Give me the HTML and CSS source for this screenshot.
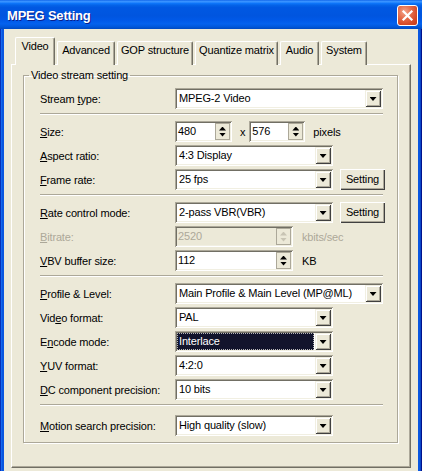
FILE: index.html
```html
<!DOCTYPE html>
<html lang="en">
<head>
<meta charset="utf-8">
<title>MPEG Setting</title>
<link rel="stylesheet" href="styles.css">
</head>
<body>
<div class="window">
  <div class="titlebar">
    <span class="title">MPEG Setting</span>
    <span class="close"><svg width="13" height="13" viewBox="0 0 13 13"><path d="M2.5 2.5 L10.5 10.5 M10.5 2.5 L2.5 10.5" stroke="#fff" stroke-width="2.2" stroke-linecap="square"/></svg></span>
  </div>
  <div class="client">
    <div class="tabs">
      <div class="tab active t-video">Video</div>
      <div class="tab t-adv">Advanced</div>
      <div class="tab t-gop">GOP structure</div>
      <div class="tab t-quant">Quantize matrix</div>
      <div class="tab t-audio">Audio</div>
      <div class="tab t-sys">System</div>
    </div>
    <div class="page">
      <fieldset class="group">
        <legend>Video stream setting</legend>
        <div class="rows">
          <div class="row">
            <span class="lbl">Stream <u>t</u>ype:</span>
            <div class="combo wide"><span class="field">MPEG-2 Video</span><span class="drop"><i></i></span></div>
          </div>
          <div class="sep"></div>
          <div class="row">
            <span class="lbl"><u>S</u>ize:</span>
            <div class="spin s-size"><span class="val">480</span><span class="arrows"><span class="up"><i></i></span><span class="dn"><i></i></span></span></div>
            <span class="times">x</span>
            <div class="spin s-size2"><span class="val">576</span><span class="arrows"><span class="up"><i></i></span><span class="dn"><i></i></span></span></div>
            <span class="unit">pixels</span>
          </div>
          <div class="row">
            <span class="lbl"><u>A</u>spect ratio:</span>
            <div class="combo"><span class="field">4:3 Display</span><span class="drop"><i></i></span></div>
          </div>
          <div class="row">
            <span class="lbl"><u>F</u>rame rate:</span>
            <div class="combo"><span class="field">25 fps</span><span class="drop"><i></i></span></div>
            <span class="btn">Setting</span>
          </div>
          <div class="sep"></div>
          <div class="row">
            <span class="lbl"><u>R</u>ate control mode:</span>
            <div class="combo"><span class="field">2-pass VBR(VBR)</span><span class="drop"><i></i></span></div>
            <span class="btn">Setting</span>
          </div>
          <div class="row disabled">
            <span class="lbl"><u>B</u>itrate:</span>
            <div class="spin s-long off"><span class="val">2520</span><span class="arrows"><span class="up"><i></i></span><span class="dn"><i></i></span></span></div>
            <span class="unit">kbits/sec</span>
          </div>
          <div class="row">
            <span class="lbl"><u>V</u>BV buffer size:</span>
            <div class="spin s-long"><span class="val">112</span><span class="arrows"><span class="up"><i></i></span><span class="dn"><i></i></span></span></div>
            <span class="unit">KB</span>
          </div>
          <div class="sep"></div>
          <div class="row">
            <span class="lbl"><u>P</u>rofile &amp; Level:</span>
            <div class="combo wide"><span class="field">Main Profile &amp; Main Level (MP@ML)</span><span class="drop"><i></i></span></div>
          </div>
          <div class="row">
            <span class="lbl">Vid<u>e</u>o format:</span>
            <div class="combo"><span class="field">PAL</span><span class="drop"><i></i></span></div>
          </div>
          <div class="row">
            <span class="lbl">E<u>n</u>code mode:</span>
            <div class="combo"><span class="field sel">Interlace</span><span class="drop"><i></i></span></div>
          </div>
          <div class="row">
            <span class="lbl"><u>Y</u>UV format:</span>
            <div class="combo"><span class="field">4:2:0</span><span class="drop"><i></i></span></div>
          </div>
          <div class="row">
            <span class="lbl"><u>D</u>C component precision:</span>
            <div class="combo"><span class="field">10 bits</span><span class="drop"><i></i></span></div>
          </div>
          <div class="sep last"></div>
          <div class="row">
            <span class="lbl"><u>M</u>otion search precision:</span>
            <div class="combo"><span class="field">High quality (slow)</span><span class="drop"><i></i></span></div>
          </div>
        </div>
      </fieldset>
    </div>
  </div>
</div>
</body>
</html>
```

FILE: styles.css
```css
* { box-sizing: border-box; }

html, body {
  margin: 0;
  padding: 0;
  overflow: hidden;
}

body {
  width: 422px;
  height: 471px;
  font-family: "Liberation Sans", Arial, sans-serif;
  font-size: 11px;
  letter-spacing: -0.15px;
  color: #000;
  background: #0A57E0;
}

.window {
  width: 422px;
  height: 480px;
  display: flex;
  flex-direction: column;
  background: #0A57E0;
  box-shadow: inset 1px 0 0 #0831B8, inset -1px 0 0 #00138C, inset 2px 0 0 #166AEE, inset -2px 0 0 #0A46C8;
}

.titlebar {
  height: 29px;
  flex: none;
  display: flex;
  align-items: center;
  justify-content: space-between;
  padding: 1px 4px 0 7px;
  background: linear-gradient(180deg, #0A5FE8 0%, #3D95FF 4%, #2A8AFF 8%, #0C74F8 12%, #0463E8 18%, #0058E2 26%, #0055DF 55%, #0059E8 70%, #0462EE 82%, #0058DC 92%, #0049C0 100%);
}

.title {
  color: #fff;
  font-weight: bold;
  font-size: 13px;
  letter-spacing: -0.2px;
  text-shadow: 1px 1px 0 #0A1F8C;
}

.close {
  width: 21px;
  height: 21px;
  border: 1px solid #fff;
  border-radius: 3px;
  display: flex;
  align-items: center;
  justify-content: center;
  background: radial-gradient(circle at 35% 30%, #F4A58C 0%, #E6704F 35%, #D54A28 70%, #C43A1A 100%);
}

.client {
  flex: 1;
  margin: 0 4px;
  background: #ECE9D8;
  display: flex;
  flex-direction: column;
}

.tabs {
  display: flex;
  align-items: flex-end;
  gap: 2px;
  height: 28px;
  margin: 8px 0 0 11px;
  position: relative;
  z-index: 1;
}

.tab {
  height: 24px;
  padding-top: 2px;
  line-height: 13px;
  text-align: center;
  background: #ECE9D8;
  border-left: 1px solid #fff;
  border-top: 1px solid #fff;
  border-right: 1px solid #716F64;
  border-radius: 2px 2px 0 0;
  box-shadow: inset -1px 0 0 #ACA899;
}

.tab.active {
  height: 28px;
  padding-top: 2px;
}

.t-video { width: 40px; }
.t-adv { width: 58px; }
.t-gop { width: 76px; }
.t-quant { width: 83px; }
.t-audio { width: 39px; }
.t-sys { width: 46px; }

.page {
  height: 404px;
  margin: -1px 7px 0 7px;
  padding: 4px 12px 0 11px;
  border: 1px solid;
  border-color: #fff #716F64 #716F64 #fff;
  box-shadow: inset -1px -1px 0 #ACA899;
}

.group {
  margin: 0;
  padding: 0;
  min-width: 0;
  border: 1px solid #ACA899;
  box-shadow: inset 1px 1px 0 #fff, 1px 1px 0 #fff;
}

.group legend {
  margin-left: 5px;
  padding: 0 2px;
  line-height: 13px;
}

.rows {
  display: flex;
  flex-direction: column;
  gap: 3px;
  padding: 6px 14px 6px 16px;
}

.row {
  display: flex;
  align-items: center;
  height: 21px;
}

.lbl {
  width: 135px;
  flex: none;
  white-space: nowrap;
}

.disabled .lbl,
.disabled .unit {
  color: #ACA899;
}

.sep {
  width: 343px;
  height: 2px;
  margin: 1px 0 3px;
  border-top: 1px solid #ACA899;
  border-bottom: 1px solid #fff;
}

.sep.last {
  margin-bottom: 6px;
}

.combo,
.spin {
  display: flex;
  height: 21px;
  padding: 2px;
  background: #fff;
  box-shadow: inset 1px 1px 0 #ACA899, inset -1px -1px 0 #fff, inset 2px 2px 0 #716F64, inset -2px -2px 0 #F1EFE2;
  flex: none;
}

.combo { width: 158px; }
.combo.wide { width: 208px; }

.field {
  flex: 1;
  padding-left: 2px;
  line-height: 17px;
  white-space: nowrap;
  overflow: hidden;
}

.field.sel {
  background: #12142C;
  color: #fff;
  outline: 1px dotted #B8B8B8;
  outline-offset: -1px;
  margin-right: 1px;
}

.drop {
  width: 16px;
  height: 17px;
  flex: none;
  display: flex;
  align-items: center;
  justify-content: center;
  background: #ECE9D8;
  box-shadow: inset 1px 1px 0 #F1EFE2, inset -1px -1px 0 #404040, inset 2px 2px 0 #fff, inset -2px -2px 0 #ACA899;
}

.drop i {
  display: block;
  width: 7px;
  height: 4px;
  margin-top: 1px;
  background: #000;
  clip-path: polygon(0 0, 100% 0, 50% 100%);
}

.s-size { width: 57px; }
.s-size2 { width: 56px; }
.s-long { width: 118px; }

.val {
  flex: 1;
  padding-left: 1px;
  line-height: 17px;
}

.arrows {
  width: 15px;
  flex: none;
  display: flex;
  flex-direction: column;
  background: #ECE9D8;
  box-shadow: inset 1px 0 0 #ACA899, inset -1px 0 0 #ACA899, inset 0 1px 0 #ACA899, inset 0 -1px 0 #ACA899;
}

.arrows .up,
.arrows .dn {
  flex: 1;
  display: flex;
  justify-content: center;
}

.arrows .up { align-items: flex-end; padding-bottom: 1px; }
.arrows .dn { align-items: flex-start; padding-top: 1px; }

.arrows i {
  display: block;
  width: 7px;
  height: 4px;
  background: #000;
}

.arrows .up i { clip-path: polygon(50% 0, 100% 100%, 0 100%); }
.arrows .dn i { clip-path: polygon(0 0, 100% 0, 50% 100%); }

.spin.off {
  background: #ECE9D8;
  color: #ACA899;
}

.spin.off .arrows i {
  background: #C8C4B4;
}

.times {
  margin: 0 4px 0 8px;
}

.unit {
  margin-left: 9px;
}

.s-size2 + .unit {
  margin-left: 8px;
}

.btn {
  width: 45px;
  height: 21px;
  margin-left: 7px;
  flex: none;
  text-align: center;
  line-height: 20px;
  background: #ECE9D8;
  box-shadow: inset 1px 1px 0 #fff, inset -1px -1px 0 #404040, inset -2px -2px 0 #ACA899;
}
```
